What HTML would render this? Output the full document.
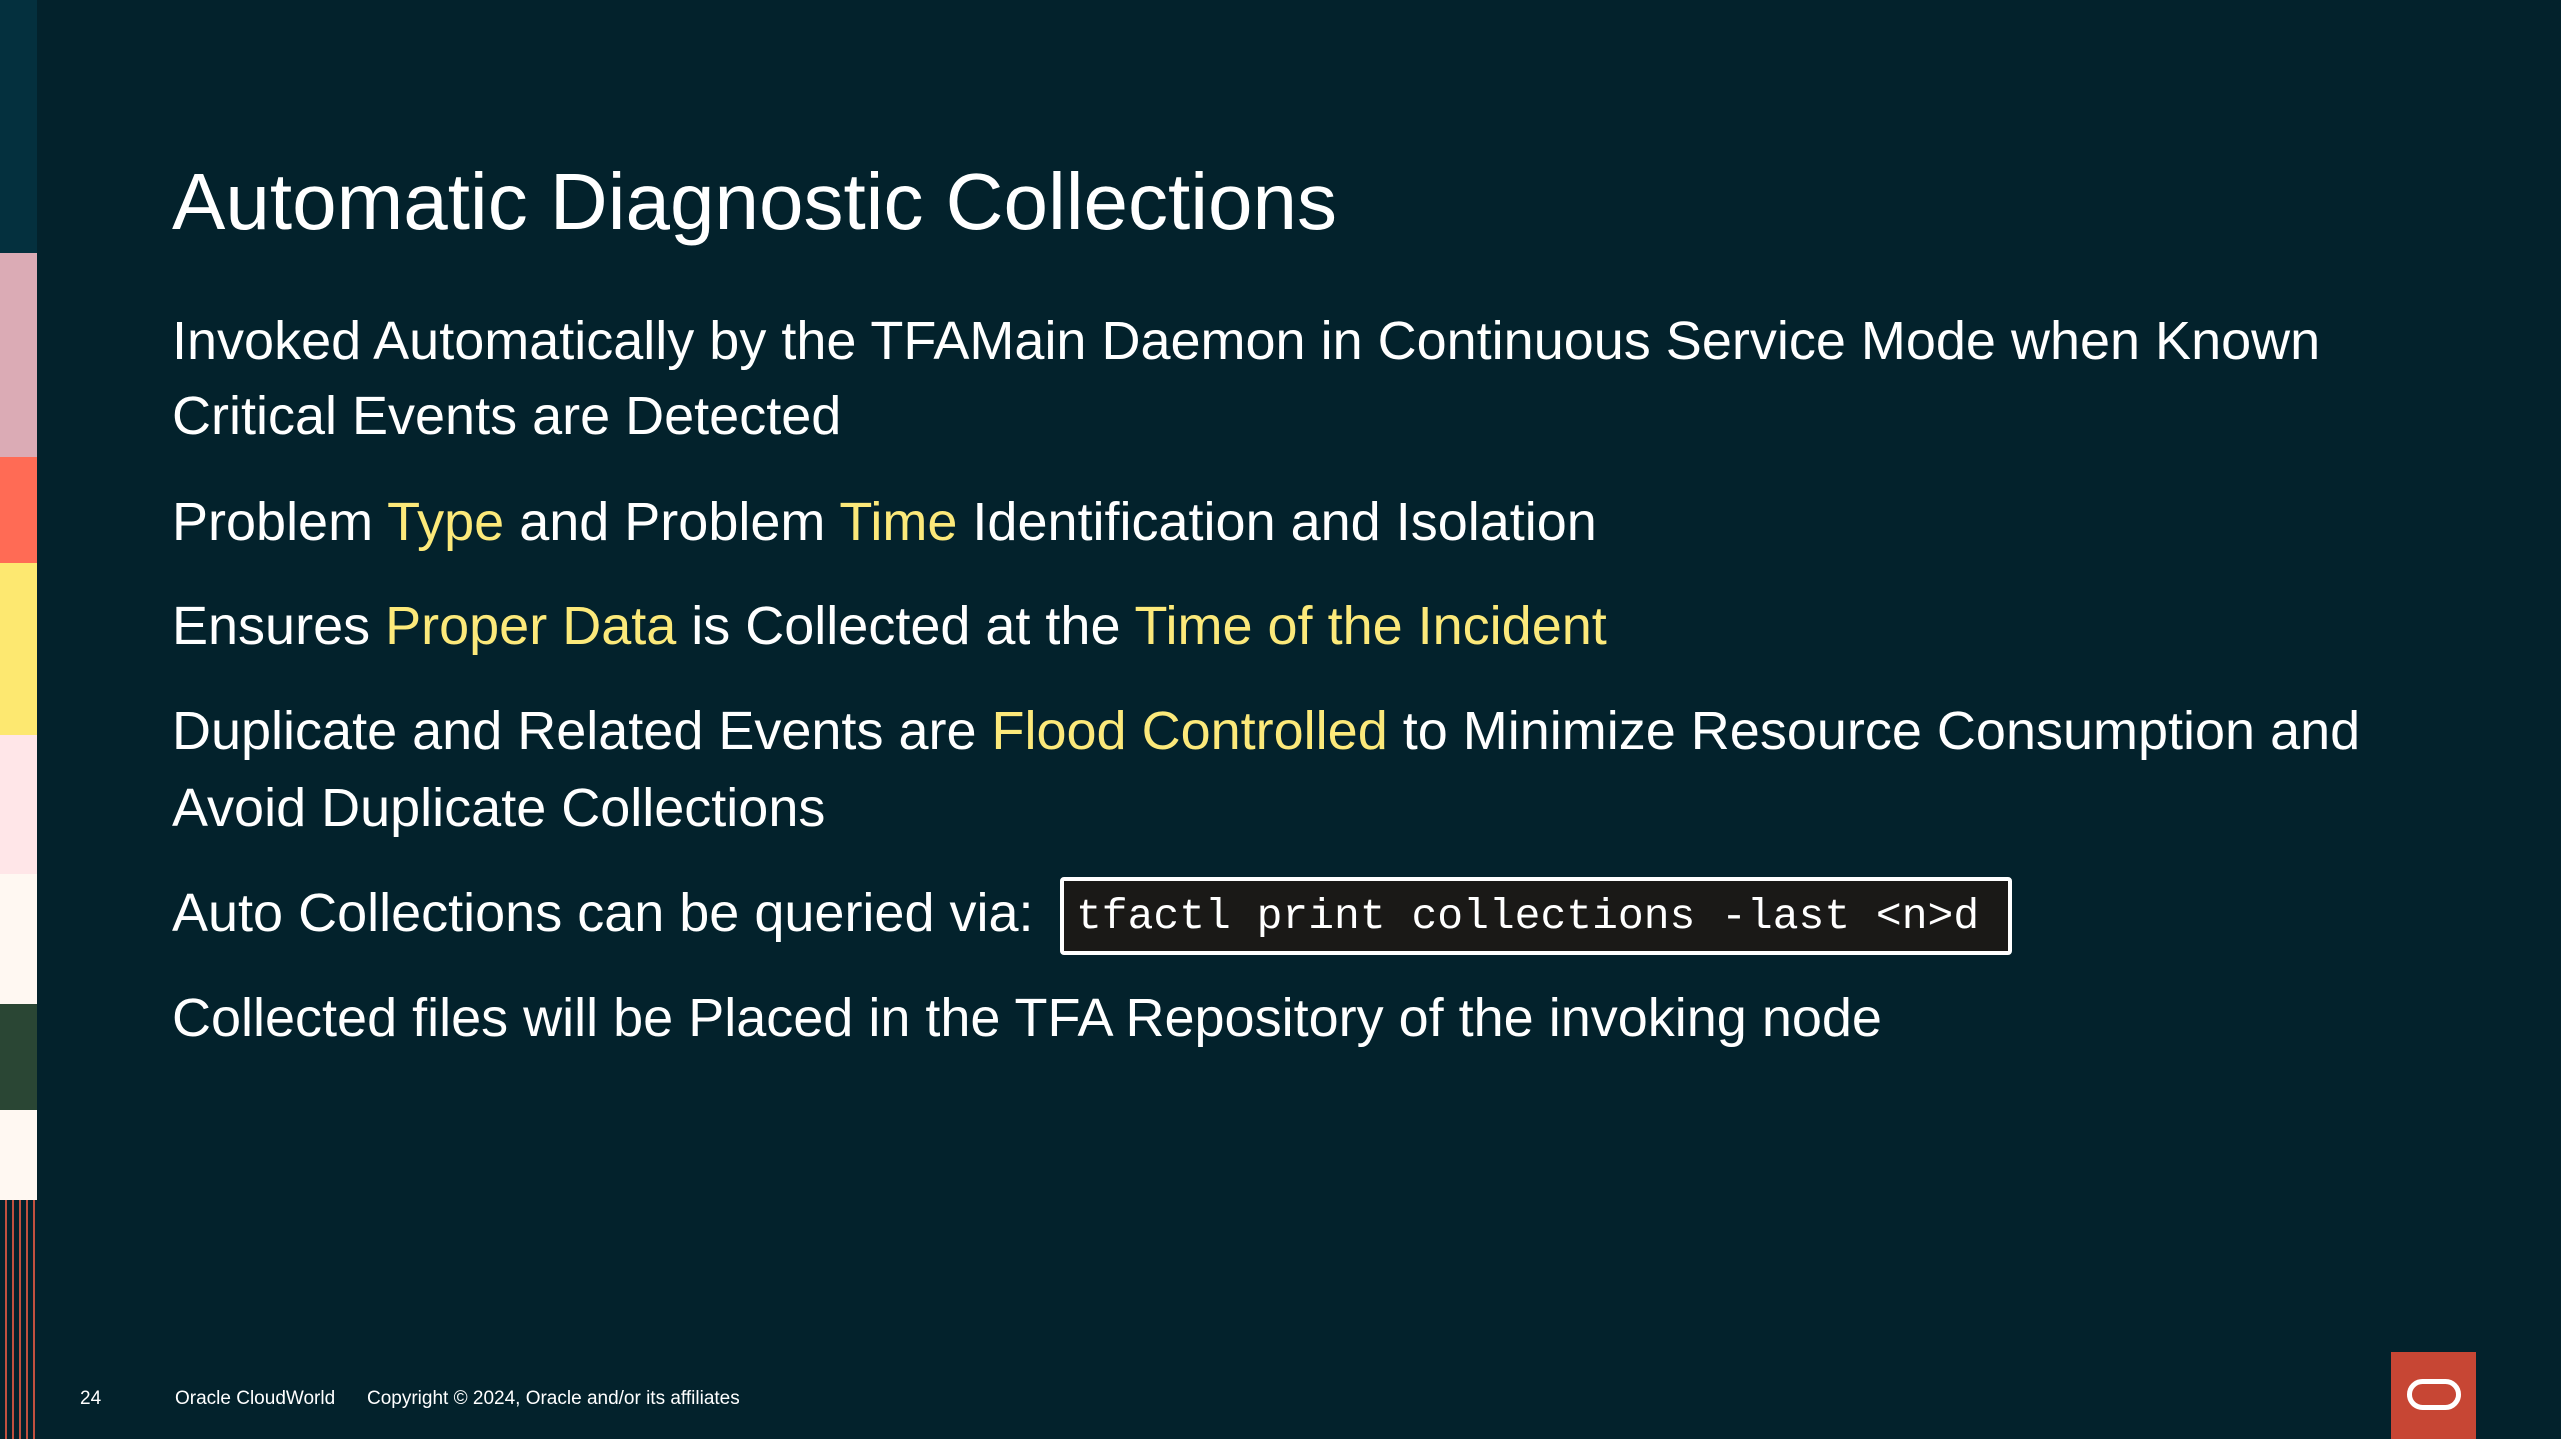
<!DOCTYPE html>
<html><head><meta charset="utf-8"><style>
html,body{margin:0;padding:0}
body{width:2561px;height:1439px;background:#03222c;position:relative;overflow:hidden;font-family:"Liberation Sans",sans-serif;color:#fff}
.s{position:absolute;left:0;width:37px}
.t{position:absolute;left:172px;white-space:nowrap;font-size:54px;line-height:1}
.y{color:#fce97a}
.f{position:absolute;top:1388px;font-size:19px;white-space:nowrap}
</style></head><body>
<div class="s" style="top:0;height:253px;background:#04303e"></div>
<div class="s" style="top:253px;height:204px;background:#dbabb5"></div>
<div class="s" style="top:457px;height:106px;background:#ff6b55"></div>
<div class="s" style="top:563px;height:172px;background:#fde870"></div>
<div class="s" style="top:735px;height:139px;background:#ffe6e8"></div>
<div class="s" style="top:874px;height:130px;background:#fff8f2"></div>
<div class="s" style="top:1004px;height:106px;background:#2a4634"></div>
<div class="s" style="top:1110px;height:90px;background:#fff8f2"></div>
<div class="s" style="top:1200px;height:239px;background:repeating-linear-gradient(90deg,#03222c 0 5px,#c0503f 5px 7px)"></div>

<div class="t" style="top:162px;font-size:80px">Automatic Diagnostic Collections</div>
<div class="t" style="top:314px">Invoked Automatically by the TFAMain Daemon in Continuous Service Mode when Known</div>
<div class="t" style="top:389px">Critical Events are Detected</div>
<div class="t" style="top:495px">Problem <span class="y">Type</span> and Problem <span class="y">Time</span> Identification and Isolation</div>
<div class="t" style="top:599px">Ensures <span class="y">Proper Data</span> is Collected at the <span class="y">Time of the Incident</span></div>
<div class="t" style="top:704px">Duplicate and Related Events are <span class="y">Flood Controlled</span> to Minimize Resource Consumption and</div>
<div class="t" style="top:781px">Avoid Duplicate Collections</div>
<div class="t" style="top:886px">Auto Collections can be queried via:</div>
<div style="position:absolute;left:1060px;top:877px;height:70px;border:4px solid #fff;border-radius:4px;background:#1a1917;font-family:'Liberation Mono',monospace;font-size:43px;line-height:72px;padding-left:12px;width:932px;white-space:nowrap">tfactl print collections -last &lt;n&gt;d</div>
<div class="t" style="top:991px">Collected files will be Placed in the TFA Repository of the invoking node</div>

<div class="f" style="left:80px">24</div>
<div class="f" style="left:175px">Oracle CloudWorld</div>
<div class="f" style="left:367px">Copyright © 2024, Oracle and/or its affiliates</div>
<div style="position:absolute;left:2391px;top:1352px;width:85px;height:87px;background:#c74634">
<div style="position:absolute;left:16px;top:27px;width:44px;height:21px;border:5px solid #fff;border-radius:16px"></div></div>
</body></html>
